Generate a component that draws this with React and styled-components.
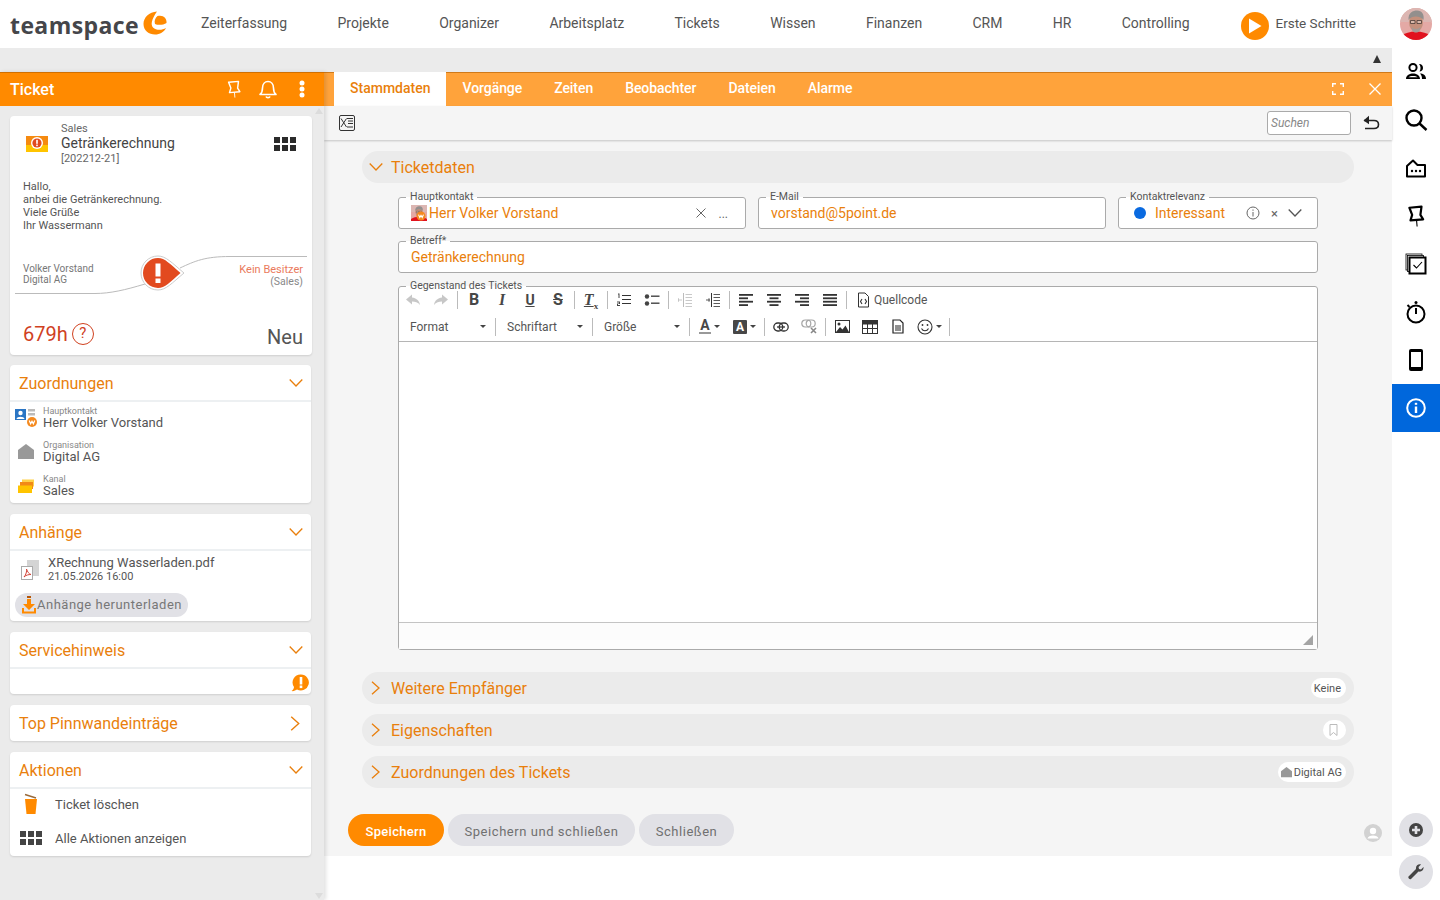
import styled, { createGlobalStyle } from "styled-components";

const orange = "#ff8a00";
const orangeText = "#e97f0c";
const gray = "#555";

const GlobalStyle = createGlobalStyle`
  html, body { margin: 0; padding: 0; height: 100%; background: #fff; overflow: hidden; }
  body { font-family: Roboto, "Liberation Sans", sans-serif; color: ${gray}; }
  * { box-sizing: border-box; }
`;

const Page = styled.div`
  width: 1440px;
  height: 900px;
  display: flex;
  flex-direction: column;
  overflow: hidden;
`;

// top navigation ------------------------------------------------------------
const TopBar = styled.header`
  height: 48px;
  flex: none;
  display: flex;
  align-items: center;
  background: #fff;
`;
const LogoWrap = styled.div`
  width: 201px;
  height: 48px;
  flex: none;
  display: flex;
  align-items: flex-start;
  padding-left: 10px;
`;
const LogoText = styled.span`
  font-family: "Open Sans", sans-serif;
  font-weight: 700;
  font-size: 23px;
  line-height: 30px;
  letter-spacing: 0.4px;
  color: #45464a;
  margin-top: 10px;
`;
const LogoMark = styled.svg`
  width: 24px;
  height: 24px;
  margin: 11px 0 0 4px;
  flex: none;
`;
const Nav = styled.nav`
  display: flex;
  gap: 50.35px;
  font-size: 14px;
  color: #555;
  padding-bottom: 2px;
`;
const StartGroup = styled.div`
  margin-left: auto;
  display: flex;
  align-items: flex-start;
  font-size: 13.5px;
  line-height: 16px;
  color: #555;
  gap: 6px;
`;
const StartLabel = styled.span`
  padding-top: 7px;
`;
const PlayCircle = styled.span`
  width: 28px;
  height: 28px;
  border-radius: 50%;
  background: ${orange};
  display: flex;
  align-items: center;
  justify-content: center;
  margin-top: 4px;
`;
const AvatarImage = styled.svg`
  width: 32px;
  height: 32px;
  border-radius: 50%;
  margin: 0 8px 0 44px;
  flex: none;
`;

// body ----------------------------------------------------------------------
const Body = styled.div`
  flex: 1;
  display: flex;
  min-height: 0;
`;
const MainColumn = styled.div`
  width: 1392px;
  display: flex;
  flex-direction: column;
`;
const CollapseStrip = styled.div`
  height: 24px;
  flex: none;
  background: #ebebeb;
  display: flex;
  align-items: center;
  justify-content: flex-end;
  padding: 0 11px 2px 0;
`;
const UpTriangle = styled.span`
  width: 0;
  height: 0;
  border-left: 4px solid transparent;
  border-right: 4px solid transparent;
  border-bottom: 8px solid #333;
`;
const Workspace = styled.div`
  flex: 1;
  display: flex;
  min-height: 0;
`;

// left panel ----------------------------------------------------------------
const LeftPanel = styled.aside`
  position: relative;
  z-index: 2;
  width: 324px;
  flex: none;
  background: #ebebeb;
  box-shadow: 2px 0 4px rgba(0, 0, 0, 0.12);
  display: flex;
  flex-direction: column;
`;
const PanelHeader = styled.div`
  height: 34px;
  flex: none;
  background: ${orange};
  box-shadow: inset 0 1px 0 rgba(170, 90, 0, 0.55);
  color: #fff;
  display: flex;
  align-items: center;
  padding-left: 10px;
  font-size: 16px;
  font-weight: 500;
`;
const PanelTitle = styled.span`
  flex: 1;
`;
const HeaderIcon = styled.span`
  width: 34px;
  height: 34px;
  display: flex;
  align-items: center;
  justify-content: center;
`;
const HeaderIcons = styled.div`
  display: flex;
  padding-right: 5px;
`;
const ScrollArrow = styled.span`
  position: absolute;
  right: 1px;
  ${(p) => (p.$down ? "bottom: 1px;" : "top: 36px;")}
  width: 0;
  height: 0;
  border-left: 4px solid transparent;
  border-right: 4px solid transparent;
  ${(p) => (p.$down ? "border-top" : "border-bottom")}: 6px solid #dcdcdc;
`;
const Cards = styled.div`
  display: flex;
  flex-direction: column;
  gap: 11px;
  padding: 10px 13px 0 10px;
`;
const Card = styled.section`
  background: #fff;
  border-radius: 4px;
  box-shadow: 0 1px 2px rgba(0, 0, 0, 0.12);
`;
const TicketCard = styled(Card)`
  height: 239px;
  width: 302px;
  margin-bottom: -1px;
  display: flex;
  flex-direction: column;
  padding: 6px 9px 0 13px;
`;
const TicketHead = styled.div`
  display: flex;
  align-items: center;
`;
const TicketIcon = styled.svg`
  width: 24px;
  height: 20px;
  margin: 0 12px 0 2px;
  flex: none;
`;
const TicketTitles = styled.div`
  flex: 1;
  display: flex;
  flex-direction: column;
`;
const SmallGray = styled.span`
  font-size: 11px;
  line-height: 13px;
  color: #666;
`;
const TicketName = styled.span`
  font-size: 14px;
  line-height: 17px;
  color: #444;
`;
const MessageText = styled.p`
  margin: 15px 0 0;
  font-size: 11px;
  line-height: 13px;
  color: #555;
`;
const Flow = styled.div`
  position: relative;
  height: 42px;
  margin: 22px 0 0;
  display: flex;
  justify-content: space-between;
  align-items: flex-end;
  font-size: 10px;
  line-height: 11px;
  padding-bottom: 10px;
`;
const FlowGraphic = styled.svg`
  position: absolute;
  left: -13px;
  top: 0;
  width: 302px;
  height: 48px;
  overflow: visible;
`;
const FlowSide = styled.div`
  position: relative;
  display: flex;
  flex-direction: column;
  color: #777;
  top: ${(p) => (p.$right ? 1 : -1)}px;
  text-align: ${(p) => (p.$right ? "right" : "left")};
  align-items: ${(p) => (p.$right ? "flex-end" : "flex-start")};
`;
const OwnerName = styled.span`
  color: #ea7a5c;
  font-size: 11px;
  line-height: 13px;
`;
const OwnerSub = styled.span`
  color: #888;
  font-size: 10.5px;
`;
const TicketFoot = styled.div`
  margin-top: auto;
  padding-bottom: 6px;
  display: flex;
  align-items: flex-end;
  justify-content: space-between;
`;
const Hours = styled.div`
  display: flex;
  align-items: center;
  gap: 4px;
  color: #d0411f;
  font-size: 20px;
  line-height: 24px;
  padding-bottom: 3px;
`;
const QuestionMark = styled.span`
  width: 22px;
  height: 22px;
  border: 1.5px solid #d0411f;
  border-radius: 50%;
  font-size: 15px;
  line-height: 19px;
  text-align: center;
`;
const Status = styled.span`
  font-size: 20px;
  line-height: 24px;
  color: #555;
`;
const BoxCard = styled(Card)`
  width: 301px;
`;
const BoxHeader = styled.div`
  height: ${(p) => (p.$open ? 37 : 36)}px;
  display: flex;
  align-items: center;
  justify-content: space-between;
  padding: 0 8px 0 9px;
  font-size: 16px;
  color: ${orangeText};
  border-bottom: ${(p) => (p.$open ? "2px solid #edf0f2" : "none")};
  padding-top: ${(p) => (p.$open ? 1 : 0)}px;
`;
const AssignRow = styled.div`
  height: ${(p) => p.$h || 34}px;
  display: flex;
  align-items: center;
  padding: 0 0 ${(p) => p.$pb || 0}px 5px;
  gap: 6px;
`;
const AssignIcon = styled.span`
  width: 22px;
  display: flex;
  justify-content: center;
  flex: none;
`;
const AssignText = styled.div`
  display: flex;
  flex-direction: column;
`;
const AssignLabel = styled.span`
  font-size: 9px;
  line-height: 10px;
  color: #888;
`;
const AssignValue = styled.span`
  font-size: 13px;
  line-height: 14px;
  color: #555;
`;
const AttachmentRow = styled.div`
  display: flex;
  align-items: center;
  padding: 5px 0 0 11px;
  gap: 9px;
`;
const FileName = styled.div`
  font-size: 13px;
  line-height: 14px;
  color: #555;
`;
const FileDate = styled.div`
  font-size: 11px;
  line-height: 13px;
  color: #555;
`;
const DownloadButton = styled.div`
  width: 173px;
  height: 24px;
  margin: 10px 0 4px 5px;
  border-radius: 12px;
  background: #e1e1e6;
  display: flex;
  align-items: center;
  padding: 0 0 1px 6px;
  font-size: 13px;
  letter-spacing: 0.5px;
  color: #777;
`;
const ServiceBody = styled.div`
  height: 25px;
  display: flex;
  justify-content: flex-end;
  align-items: flex-end;
  padding: 0 2px 2px 0;
`;
const ActionList = styled.div`
  margin-top: -2px;
  padding-bottom: 1px;
`;
const ActionRow = styled.div`
  height: 34px;
  display: flex;
  align-items: center;
  font-size: 13px;
  color: #555;
`;
const ActionIcon = styled.span`
  width: 45px;
  flex: none;
  display: flex;
  justify-content: center;
  padding-right: 3px;
`;
const Grid = styled.span`
  display: grid;
  grid-template-columns: repeat(3, ${(p) => p.$size}px);
  grid-auto-rows: ${(p) => p.$size}px;
  gap: 2px;
  margin-right: ${(p) => p.$mr || 0}px;
  & > i {
    display: block;
    background: ${(p) => p.$color};
  }
`;

// right panel ---------------------------------------------------------------
const ContentPanel = styled.main`
  flex: 1;
  display: flex;
  flex-direction: column;
  min-width: 0;
`;
const TabBar = styled.div`
  height: 34px;
  flex: none;
  background: #ffa33b;
  box-shadow: inset 0 1px 0 rgba(170, 90, 0, 0.55);
  display: flex;
  padding-left: 10px;
`;
const Tab = styled.div`
  padding: 0 16px 2px;
  display: flex;
  align-items: center;
  font-size: 14px;
  font-weight: 500;
  letter-spacing: ${(p) => (p.$active ? 0 : -0.06)}px;
  color: ${(p) => (p.$active ? orangeText : "#fff")};
  background: ${(p) => (p.$active ? "#fff" : "transparent")};
`;
const TabTools = styled.div`
  margin-left: auto;
  display: flex;
  align-items: center;
  gap: 24px;
  padding-right: 10px;
`;
const Toolbar = styled.div`
  position: relative;
  z-index: 1;
  height: 34px;
  flex: none;
  background: #f5f5f5;
  box-shadow: 0 1px 2px rgba(0, 0, 0, 0.2);
  display: flex;
  align-items: center;
  padding: 0 12px 0 15px;
`;
const SearchBox = styled.div`
  margin-left: auto;
  width: 84px;
  height: 24px;
  background: #fff;
  border: 1px solid #aaa;
  border-radius: 3px;
  font-size: 12px;
  font-style: italic;
  line-height: 22px;
  padding-left: 3px;
  color: #888;
`;
const BackIcon = styled.svg`
  margin-left: 11px;
  flex: none;
`;
const FormArea = styled.div`
  height: 716px;
  flex: none;
  background: #f5f5f5;
  display: flex;
  flex-direction: column;
  padding: 11px 10px 0 24px;
`;
const SectionBar = styled.div`
  height: 32px;
  margin: ${(p) => p.$mt || 0}px 28px 0 14px;
  flex: none;
  background: #ebebeb;
  border-radius: 16px;
  display: flex;
  align-items: center;
  padding: 0 8px 0 7px;
  font-size: 16px;
  color: ${orangeText};
`;
const SectionTitle = styled.span`
  flex: 1;
  margin-left: 8px;
`;
const Pill = styled.span`
  height: 20px;
  padding: 0 ${(p) => (p.$wide ? 4 : 5)}px 0 3px;
  background: #fff;
  border-radius: 10px;
  display: flex;
  align-items: center;
  gap: 2px;
  font-size: 11px;
  color: #555;
`;
const FormGrid = styled.div`
  margin: 8px 64px 0 50px;
  display: grid;
  grid-template-columns: 348px 348px 200px;
  column-gap: 12px;
  row-gap: 6px;
`;
const Field = styled.fieldset`
  margin: 0;
  padding: 0;
  min-width: 0;
  height: ${(p) => p.$h}px;
  background: #fff;
  border: 1px solid #aaa;
  border-radius: 3px;
  grid-column: ${(p) => p.$span || "auto"};
  display: flex;
  flex-direction: column;
`;
const Legend = styled.legend`
  margin-left: 7px;
  padding: 0 4px;
  font-size: 10.5px;
  line-height: 12px;
  height: 12px;
  color: #555;
`;
const FieldBody = styled.div`
  height: 20px;
  display: flex;
  align-items: center;
  padding: 0 12px;
  font-size: 14px;
  color: ${orangeText};
`;
const ClearX = styled.span`
  color: #666;
  font-size: ${(p) => p.$size}px;
  line-height: 1;
  margin: ${(p) => p.$margin};
`;
const SpacedEnd = styled.span`
  margin-left: auto;
  display: flex;
  align-items: center;
  margin-right: ${(p) => p.$mr || 0}px;
`;
const ContactPhoto = styled.svg`
  width: 16px;
  height: 16px;
  margin-right: 2px;
  flex: none;
`;
const BlueDot = styled.span`
  width: 12px;
  height: 12px;
  border-radius: 50%;
  background: #0a6ae0;
  margin: 0 9px 0 3px;
  flex: none;
`;

// editor --------------------------------------------------------------------
const EditorField = styled(Field)`
  margin-top: 1px;
`;
const EditorTools = styled.div`
  height: 50px;
  flex: none;
  border-bottom: 1px solid #b5b5b5;
  display: flex;
  flex-direction: column;
`;
const ToolRow = styled.div`
  height: 27px;
  flex: none;
  display: flex;
  align-items: center;
  font-size: 12px;
  color: #555;
  margin-top: ${(p) => p.$mt || 0}px;
`;
const ToolButton = styled.span`
  width: ${(p) => p.$w || 28}px;
  height: 24px;
  flex: none;
  display: flex;
  align-items: center;
  justify-content: center;
  gap: 3px;
  opacity: ${(p) => (p.$off ? 0.32 : 1)};
  margin-right: ${(p) => p.$mr || 0}px;
`;
const Sep = styled.span`
  width: 1px;
  height: 18px;
  margin: 0 2px;
  flex: none;
  background: #bbb;
`;
const Combo = styled.span`
  width: ${(p) => p.$w}px;
  height: 24px;
  padding-left: ${(p) => p.$pl}px;
  padding-right: 7px;
  flex: none;
  display: flex;
  align-items: center;
  justify-content: space-between;
`;
const Caret = styled.span`
  width: 0;
  height: 0;
  border-left: 3px solid transparent;
  border-right: 3px solid transparent;
  border-top: 3px solid #444;
  flex: none;
`;
const Glyph = styled.span`
  font-family: ${(p) => (p.$serif ? '"Liberation Serif", serif' : "Roboto, sans-serif")};
  font-size: ${(p) => p.$size || 16}px;
  font-weight: 700;
  font-style: ${(p) => (p.$italic ? "italic" : "normal")};
  text-decoration: ${(p) => p.$deco || "none"};
  color: #474747;
  line-height: 16px;
`;
const SubX = styled.sub`
  font-size: 9px;
  font-weight: 700;
  line-height: 0;
  font-style: normal;
`;
const ColorA = styled.span`
  font-size: 14px;
  font-weight: 700;
  line-height: 13px;
  color: #474747;
  border-bottom: 2px solid #999;
  padding: 0 1px;
`;
const FilledA = styled.span`
  width: 14px;
  height: 14px;
  background: #474747;
  color: #fff;
  font-size: 12px;
  font-weight: 700;
  line-height: 14px;
  text-align: center;
  border-radius: 1px;
`;
const EditorBody = styled.div`
  flex: 1;
  background: #fff;
`;
const EditorFoot = styled.div`
  height: 27px;
  flex: none;
  background: #fcfcfc;
  border-top: 1px solid #c4c4c4;
  display: flex;
  justify-content: flex-end;
  align-items: flex-end;
  padding: 0 4px 4px 0;
`;
const Resizer = styled.span`
  width: 0;
  height: 0;
  border-left: 10px solid transparent;
  border-bottom: 10px solid #a4a4a4;
`;

// footer buttons ------------------------------------------------------------
const Actions = styled.div`
  display: flex;
  align-items: center;
  gap: 4px;
  margin-top: 26px;
`;
const ActionButton = styled.div`
  height: 32px;
  width: ${(p) => p.$w}px;
  padding-top: 2px;
  border-radius: 16px;
  display: flex;
  align-items: center;
  justify-content: center;
  font-size: 13px;
  font-weight: ${(p) => (p.$primary ? 500 : 400)};
  letter-spacing: ${(p) => (p.$primary ? 0.3 : 0.55)}px;
  background: ${(p) => (p.$primary ? orange : "#e1e1e6")};
  color: ${(p) => (p.$primary ? "#fff" : "#707070")};
`;
const UserDot = styled.span`
  margin-left: auto;
  width: 18px;
  height: 18px;
  margin-top: 6px;
  flex: none;
  display: flex;
`;

// rail ----------------------------------------------------------------------
const Rail = styled.aside`
  width: 48px;
  flex: none;
  display: flex;
  flex-direction: column;
  background: #fff;
`;
const RailItem = styled.div`
  height: 48px;
  flex: none;
  display: flex;
  align-items: center;
  justify-content: center;
  background: ${(p) => (p.$active ? "#0067dc" : "transparent")};
`;
const RailFoot = styled.div`
  margin-top: auto;
  display: flex;
  flex-direction: column;
  align-items: center;
  gap: 8px;
  padding-bottom: 11px;
`;
const RoundButton = styled.div`
  width: 34px;
  height: 34px;
  border-radius: 50%;
  background: #e1e1e6;
  display: flex;
  align-items: center;
  justify-content: center;
`;

// drawings ------------------------------------------------------------------
const Chevron = ({ dir = "down", size = 14, color = orangeText }) => {
  const points = dir === "down" ? "0.7,3.5 7,10 13.3,3.5" : "3,0.7 10,7 3,13.3";
  return (
    <svg width={size} height={size} viewBox="0 0 14 14" fill="none" stroke={color} strokeWidth="1.3">
      <polyline points={points} />
    </svg>
  );
};

const PinIcon = ({ color = "#000", size = 20, sw = 1.8 }) => (
  <svg width={size} height={size} viewBox="0 0 20 20" fill="none" stroke={color} strokeWidth={sw}>
    <path d="M4 2.5 L15 1.5 L14 9 L16.5 13 L5 14 L6.5 9 Z" strokeLinejoin="round" />
    <path d="M10.5 14 L11 19.5" strokeWidth="1" />
  </svg>
);

const HouseIcon = ({ w = 18, color = "#999" }) => (
  <svg width={w} height={w} viewBox="0 0 16 16" fill={color}>
    <path d="M0 15 V6 L8 0 L16 6 V15 Z" />
  </svg>
);

const FaceDrawing = () => (
  <>
    <rect width="32" height="32" fill="#e4a9a5" />
    <rect x="0" y="0" width="32" height="14" fill="#dcb6b2" />
    <path d="M0 32 V28 C5 25 10 23.5 16 23.5 C22 23.5 27 25 32 28 V32 Z" fill="#e1121e" />
    <ellipse cx="16" cy="14" rx="7" ry="10" fill="#c4907c" />
    <path d="M8.5 12 C8 4.5 13 2.5 17 2.5 C22 2.5 24.5 6.5 23.5 12 C21 8 12 7 8.5 12 Z" fill="#938f8d" />
    <path d="M10.5 12.5 h4.5 v3 h-4.5 Z M17 12.5 h4.5 v3 h-4.5 Z" fill="#d8b8aa" stroke="#4a3b36" strokeWidth="0.8" />
    <path d="M11.5 19 C14 21.5 18 21.5 20.5 19 L19.5 23 C17.5 25 14.5 25 12.5 23 Z" fill="#a59a96" />
  </>
);

const WBadge = ({ cx, cy, r }) => (
  <>
    <circle cx={cx} cy={cy} r={r} fill="#f58a1f" />
    <path d={`M${cx - r * 0.55} ${cy - r * 0.3} l${r * 0.28} ${r * 0.65} l${r * 0.27} -${r * 0.5} l${r * 0.27} ${r * 0.5} l${r * 0.28} -${r * 0.65}`} fill="none" stroke="#fff" strokeWidth={r * 0.25} />
  </>
);

const SmallLine = ({ x, y, w, h = 1, fill = "#333" }) => <rect x={x} y={y} width={w} height={h} fill={fill} />;

const OrderedList = () => (
  <svg width="16" height="16" viewBox="0 0 16 16" fill="#444">
    <SmallLine x="6" y="3" w="9" />
    <SmallLine x="6" y="7" w="9" />
    <SmallLine x="6" y="11" w="9" />
    <path d="M2 1.5 h1.5 v4.5 h-1 v-3.5 h-.5 Z M1 9.5 h3 v2.5 h-2 v1 h2 v1 h-3 v-2.5 h2 v-1 h-2 Z" />
  </svg>
);
const BulletList = () => (
  <svg width="16" height="16" viewBox="0 0 16 16" fill="#444">
    <circle cx="3" cy="4.5" r="2.2" />
    <circle cx="3" cy="11.5" r="2.2" />
    <rect x="7" y="3.5" width="8.5" height="1.4" />
    <rect x="7" y="10.5" width="8.5" height="1.4" />
  </svg>
);
const IndentIcon = ({ out }) => (
  <svg width="16" height="16" viewBox="0 0 16 16" fill="#333">
    {[2, 5, 8, 11, 14].map((y) => (
      <rect key={y} x="8.5" y={y} width={6.5} height="0.8" />
    ))}
    <rect x="6" y="1" width="1" height="14" />
    <rect x="1" y="7.6" width="4" height="0.8" />
    <rect x={out ? 1 : 3.6} y="6.2" width="0.8" height="3.6" />
  </svg>
);
const AlignIcon = ({ kind }) => {
  const widths = kind === "justify" ? [14, 14, 14, 14] : [14, 9, 14, 9];
  return (
    <svg width="14" height="14" viewBox="0 0 14 14" fill="#333">
      {widths.map((w, i) => {
        const x = kind === "left" || kind === "justify" ? 0 : kind === "center" ? (14 - w) / 2 : 14 - w;
        return <rect key={i} x={x} y={1 + i * 3.4} width={w} height="1.8" />;
      })}
    </svg>
  );
};
const SourceIcon = () => (
  <svg width="14" height="16" viewBox="0 0 14 16" fill="none" stroke="#333">
    <path d="M2.5 1 H9 L12.5 4.5 V15 H2.5 Z" />
    <path d="M6 7 L4.5 9.5 L6 12 M9 7 L10.5 9.5 L9 12" strokeWidth="1.1" />
  </svg>
);
const LinkIcon = () => (
  <svg width="16" height="12" viewBox="0 0 16 12" fill="none" stroke="#333" strokeWidth="1.3">
    <rect x="0.8" y="2" width="9" height="8" rx="4" />
    <rect x="6.2" y="2" width="9" height="8" rx="4" />
    <path d="M4 6 H12" />
  </svg>
);
const UnlinkIcon = () => (
  <svg width="16" height="15" viewBox="0 0 16 15" fill="none" stroke="#a5a5a5" strokeWidth="1.2">
    <rect x="0.8" y="1" width="9" height="7" rx="3.5" />
    <rect x="5.2" y="1" width="9" height="7" rx="3.5" />
    <path d="M10 9 L15 14 M15 9 L10 14" stroke="#888" strokeWidth="1.6" />
  </svg>
);
const ImageIcon = () => (
  <svg width="15" height="13" viewBox="0 0 15 13">
    <rect x="0.5" y="0.5" width="14" height="12" fill="#fff" stroke="#333" />
    <circle cx="4" cy="4" r="1.5" fill="#333" />
    <path d="M1 12 L5 7 L7.5 9.5 L10.5 5.5 L14 12 Z" fill="#333" />
  </svg>
);
const TableIcon = () => (
  <svg width="16" height="14" viewBox="0 0 16 14" fill="none" stroke="#333">
    <rect x="0.5" y="0.5" width="15" height="13" />
    <rect x="0.5" y="0.5" width="15" height="3.5" fill="#333" />
    <path d="M5.5 4 V13.5 M10.5 4 V13.5 M0.5 8.5 H15.5" />
  </svg>
);
const PageIcon = () => (
  <svg width="12" height="15" viewBox="0 0 12 15" fill="none" stroke="#222">
    <path d="M1 1 H8 L11 4 V14 H1 Z" strokeWidth="1.2" />
    <path d="M3 7 H9 M3 9 H9 M3 11 H9" />
  </svg>
);
const SmileyIcon = () => (
  <svg width="16" height="16" viewBox="0 0 16 16" fill="none" stroke="#333" strokeWidth="1.1">
    <circle cx="8" cy="8" r="7" />
    <circle cx="5.5" cy="6" r="0.9" fill="#333" stroke="none" />
    <circle cx="10.5" cy="6" r="0.9" fill="#333" stroke="none" />
    <path d="M4.5 9.5 C6 12.5 10 12.5 11.5 9.5" />
  </svg>
);
const ArrowIcon = ({ flip }) => (
  <svg width="16" height="12" viewBox="0 0 16 12" fill="#555" transform={flip ? "scale(-1 1)" : undefined}>
    <path d="M7 0.5 L1 5.5 L7 10.5 V7.5 C10 7.5 13 8 15 11 C14.5 6.5 11 4 7 3.5 Z" />
  </svg>
);

const navItems = ["Zeiterfassung", "Projekte", "Organizer", "Arbeitsplatz", "Tickets", "Wissen", "Finanzen", "CRM", "HR", "Controlling"];
const tabs = ["Stammdaten", "Vorgänge", "Zeiten", "Beobachter", "Dateien", "Alarme"];

const App = () => {
  return (
    <Page>
      <GlobalStyle />
      <TopBar>
        <LogoWrap>
          <LogoText>teamspace</LogoText>
          <LogoMark viewBox="0 0 24 24">
            <path d="M14 0.5 C6 1 0.5 6.5 0.5 13 C0.5 19.5 6 23.5 12 23.5 C17 23.5 21 21 23 17 C19 19.5 13 19.5 10 16.5 C7.5 13.5 8.5 8.5 14 0.5 Z" fill={orange} />
            <path d="M14.5 5 C20 3.5 24 7 23.5 12 C20.5 14 15 14.5 12 13 C11 10 12 7 14.5 5 Z" fill={orange} />
          </LogoMark>
        </LogoWrap>
        <Nav>
          {navItems.map((item) => (
            <span key={item}>{item}</span>
          ))}
        </Nav>
        <StartGroup>
          <PlayCircle>
            <svg width="14" height="16" viewBox="0 0 14 16" fill="#fff">
              <path d="M1 0.5 L13.5 8 L1 15.5 Z" />
            </svg>
          </PlayCircle>
          <StartLabel>Erste Schritte</StartLabel>
        </StartGroup>
        <AvatarImage viewBox="0 0 32 32">
          <FaceDrawing />
        </AvatarImage>
      </TopBar>

      <Body>
        <MainColumn>
          <CollapseStrip>
            <UpTriangle />
          </CollapseStrip>
          <Workspace>
            <LeftPanel>
              <PanelHeader>
                <PanelTitle>Ticket</PanelTitle>
                <HeaderIcons>
                  <HeaderIcon>
                    <PinIcon color="#fff" size={18} sw={1.6} />
                  </HeaderIcon>
                  <HeaderIcon>
                    <svg width="20" height="20" viewBox="0 0 20 20" fill="none" stroke="#fff" strokeWidth="1.6">
                      <path d="M2 15.5 C4 14 4.5 12 4.5 9 C4.5 5 7 2.5 10 2.5 C13 2.5 15.5 5 15.5 9 C15.5 12 16 14 18 15.5 Z" strokeLinejoin="round" />
                      <path d="M8 17.5 C8.5 19 11.5 19 12 17.5" />
                    </svg>
                  </HeaderIcon>
                  <HeaderIcon>
                    <svg width="6" height="18" viewBox="0 0 6 18" fill="#fff">
                      <circle cx="3" cy="3" r="2.5" />
                      <circle cx="3" cy="9" r="2.5" />
                      <circle cx="3" cy="15" r="2.5" />
                    </svg>
                  </HeaderIcon>
                </HeaderIcons>
              </PanelHeader>
              <ScrollArrow />
              <ScrollArrow $down />
              <Cards>
                <TicketCard>
                  <TicketHead>
                    <TicketIcon viewBox="0 0 24 20">
                      <rect x="1" y="2" width="22" height="9" fill="#f58a10" />
                      <rect x="1" y="11" width="22" height="7" fill="#ffc400" />
                      <circle cx="12" cy="9" r="6" fill="#fff" />
                      <circle cx="12" cy="9" r="4.6" fill="#e0491f" />
                      <rect x="11.2" y="5.8" width="1.6" height="4" fill="#fff" />
                      <rect x="11.2" y="10.6" width="1.6" height="1.6" fill="#fff" />
                    </TicketIcon>
                    <TicketTitles>
                      <SmallGray>Sales</SmallGray>
                      <TicketName>Getränkerechnung</TicketName>
                      <SmallGray>[202212-21]</SmallGray>
                    </TicketTitles>
                    <Grid $size={6} $color="#2b2b2b" $mr={7}>
                      <i /><i /><i /><i /><i /><i />
                    </Grid>
                  </TicketHead>
                  <MessageText>
                    Hallo,<br />
                    anbei die Getränkerechnung.<br />
                    Viele Grüße<br />
                    Ihr Wassermann
                  </MessageText>
                  <Flow>
                    <FlowGraphic viewBox="0 0 302 48">
                      <path d="M5 39.5 H85 C100 39.5 115 36 135 30 M170 14 C185 7 195 2.5 220 2.5 H297" fill="none" stroke="#bbb" />
                      <path d="M148 2 A17 17 0 1 0 148 36 C156 36 162 29 174 19 C162 9 156 2 148 2 Z" fill="#fff" stroke="#ccc" />
                      <path d="M148 4 A15 15 0 1 0 148 34 C155 34 160 28 170.5 19 C160 10 155 4 148 4 Z" fill="#e24a1f" />
                      <rect x="145.5" y="9.5" width="5" height="13" fill="#fff" />
                      <rect x="145.5" y="24.5" width="5" height="4.5" fill="#fff" />
                    </FlowGraphic>
                    <FlowSide>
                      <span>Volker Vorstand</span>
                      <span>Digital AG</span>
                    </FlowSide>
                    <FlowSide $right>
                      <OwnerName>Kein Besitzer</OwnerName>
                      <OwnerSub>(Sales)</OwnerSub>
                    </FlowSide>
                  </Flow>
                  <TicketFoot>
                    <Hours>
                      679h
                      <QuestionMark>?</QuestionMark>
                    </Hours>
                    <Status>Neu</Status>
                  </TicketFoot>
                </TicketCard>

                <BoxCard>
                  <BoxHeader $open>
                    Zuordnungen
                    <Chevron />
                  </BoxHeader>
                  <AssignRow $h={33} $pb={2}>
                    <AssignIcon>
                      <svg width="22" height="20" viewBox="0 0 22 20">
                        <rect x="0" y="1" width="11" height="11" fill="#2a75c4" />
                        <circle cx="5.5" cy="5" r="2.2" fill="#fff" />
                        <path d="M1.5 11 C2 8 9 8 9.5 11 Z" fill="#fff" />
                        <rect x="13" y="1" width="7" height="2.5" fill="#bbb" />
                        <rect x="13" y="5" width="7" height="2.5" fill="#bbb" />
                        <WBadge cx={17} cy={14} r={5} />
                      </svg>
                    </AssignIcon>
                    <AssignText>
                      <AssignLabel>Hauptkontakt</AssignLabel>
                      <AssignValue>Herr Volker Vorstand</AssignValue>
                    </AssignText>
                  </AssignRow>
                  <AssignRow>
                    <AssignIcon>
                      <HouseIcon w={16} />
                    </AssignIcon>
                    <AssignText>
                      <AssignLabel>Organisation</AssignLabel>
                      <AssignValue>Digital AG</AssignValue>
                    </AssignText>
                  </AssignRow>
                  <AssignRow>
                    <AssignIcon>
                      <svg width="18" height="15" viewBox="0 0 18 15">
                        <rect x="5" y="0.5" width="12" height="7" fill="#ffd24a" />
                        <rect x="3" y="3" width="13" height="7" fill="#f28a17" />
                        <rect x="1" y="6.5" width="14" height="7.5" fill="#ffc400" />
                      </svg>
                    </AssignIcon>
                    <AssignText>
                      <AssignLabel>Kanal</AssignLabel>
                      <AssignValue>Sales</AssignValue>
                    </AssignText>
                  </AssignRow>
                </BoxCard>

                <BoxCard>
                  <BoxHeader $open>
                    Anhänge
                    <Chevron />
                  </BoxHeader>
                  <AttachmentRow>
                    <svg width="18" height="20" viewBox="0 0 18 20">
                      <rect x="6" y="0" width="12" height="16" fill="#d4d4d4" />
                      <rect x="0.5" y="6.5" width="11" height="13" fill="#fff" stroke="#aaa" />
                      <path d="M3 17 C5 15 6 11 5.5 9 C6.5 12 8 14 10 14.5 C7.5 14.5 5 15 3 17 Z" fill="none" stroke="#d2453a" />
                    </svg>
                    <div>
                      <FileName>XRechnung Wasserladen.pdf</FileName>
                      <FileDate>21.05.2026 16:00</FileDate>
                    </div>
                  </AttachmentRow>
                  <DownloadButton>
                    <svg width="16" height="18" viewBox="0 0 16 18" fill={orange}>
                      <rect x="6" y="0" width="4" height="2" fill="#b3560a" />
                      <path d="M6 3 H10 V8 H14 L8 14 L2 8 H6 Z" />
                      <rect x="1" y="15.5" width="14" height="2" />
                      <rect x="1" y="12" width="2" height="5" />
                      <rect x="13" y="12" width="2" height="5" />
                    </svg>
                    Anhänge herunterladen
                  </DownloadButton>
                </BoxCard>

                <BoxCard>
                  <BoxHeader $open>
                    Servicehinweis
                    <Chevron />
                  </BoxHeader>
                  <ServiceBody>
                    <svg width="18" height="18" viewBox="0 0 18 18">
                      <path d="M10 0.5 A8 8 0 1 1 6 15.5 C4.5 16.5 2.5 17.5 0.5 17 C2 16 3 14.5 3 13 A8 8 0 0 1 10 0.5 Z" fill={orange} />
                      <rect x="8.7" y="3" width="2.6" height="7.5" fill="#fff" />
                      <rect x="8.7" y="11.5" width="2.6" height="2.6" fill="#fff" />
                    </svg>
                  </ServiceBody>
                </BoxCard>

                <BoxCard>
                  <BoxHeader>
                    Top Pinnwandeinträge
                    <Chevron dir="right" size={15} />
                  </BoxHeader>
                </BoxCard>

                <BoxCard>
                  <BoxHeader $open>
                    Aktionen
                    <Chevron />
                  </BoxHeader>
                  <ActionList>
                    <ActionRow>
                      <ActionIcon>
                        <svg width="14" height="22" viewBox="0 0 14 22">
                          <path d="M1 1.5 L12 5" stroke="#9a6a3a" strokeWidth="1.4" />
                          <path d="M1 6 H13 L11.5 21 H2.5 Z" fill={orange} />
                        </svg>
                      </ActionIcon>
                      Ticket löschen
                    </ActionRow>
                    <ActionRow>
                      <ActionIcon>
                        <Grid $size={6} $color="#444">
                          <i /><i /><i /><i /><i /><i />
                        </Grid>
                      </ActionIcon>
                      Alle Aktionen anzeigen
                    </ActionRow>
                  </ActionList>
                </BoxCard>
              </Cards>
            </LeftPanel>

            <ContentPanel>
              <TabBar>
                {tabs.map((tab, i) => (
                  <Tab key={tab} $active={i === 0}>{tab}</Tab>
                ))}
                <TabTools>
                  <svg width="12" height="12" viewBox="0 0 12 12" fill="none" stroke="#fff" strokeWidth="1.4">
                    <path d="M0.7 4 V0.7 H4 M8 0.7 H11.3 V4 M11.3 8 V11.3 H8 M4 11.3 H0.7 V8" />
                  </svg>
                  <svg width="14" height="14" viewBox="0 0 14 14" stroke="#fff" strokeWidth="1.3">
                    <path d="M1.5 1.5 L12.5 12.5 M12.5 1.5 L1.5 12.5" />
                  </svg>
                </TabTools>
              </TabBar>

              <Toolbar>
                <svg width="16" height="16" viewBox="0 0 16 16" fill="none" stroke="#333">
                  <rect x="0.5" y="0.5" width="15" height="15" rx="1.5" />
                  <path d="M2 3.5 L7.5 12 M7.5 3.5 L2 12 M8 3.5 H14 M9 6 H14 M9 8.5 H14 M8 12 H14" />
                </svg>
                <SearchBox>Suchen</SearchBox>
                <BackIcon width="18" height="16" viewBox="0 0 18 16" fill="none" stroke="#222" strokeWidth="1.6">
                  <path d="M2 5.5 H12 C15 5.5 16.5 7.5 16.5 9.5 C16.5 12 15 13.5 12 13.5 H3" />
                  <path d="M7 0.8 L1.5 5.5 L7 9.2 Z" fill="#222" stroke="none" />
                </BackIcon>
              </Toolbar>

              <FormArea>
                <SectionBar>
                  <Chevron />
                  <SectionTitle>Ticketdaten</SectionTitle>
                </SectionBar>

                <FormGrid>
                  <Field $h={38}>
                    <Legend>Hauptkontakt</Legend>
                    <FieldBody>
                      <ContactPhoto viewBox="0 0 32 32">
                        <FaceDrawing />
                        <WBadge cx={20} cy={22} r={9} />
                      </ContactPhoto>
                      Herr Volker Vorstand
                      <SpacedEnd>
                        <svg width="12" height="12" viewBox="0 0 12 12" stroke="#666" strokeWidth="1">
                          <path d="M1.5 1.5 L10.5 10.5 M10.5 1.5 L1.5 10.5" />
                        </svg>
                        <ClearX $size={12} $margin="2px 5px 0 12px">...</ClearX>
                      </SpacedEnd>
                    </FieldBody>
                  </Field>
                  <Field $h={38}>
                    <Legend>E-Mail</Legend>
                    <FieldBody>vorstand@5point.de</FieldBody>
                  </Field>
                  <Field $h={38}>
                    <Legend>Kontaktrelevanz</Legend>
                    <FieldBody>
                      <BlueDot />
                      Interessant
                      <SpacedEnd $mr={3}>
                        <svg width="14" height="14" viewBox="0 0 14 14" fill="none" stroke="#666">
                          <circle cx="7" cy="7" r="6" />
                          <path d="M7 6 V10.5 M7 3.5 V4.8" />
                        </svg>
                        <ClearX $size={13} $margin="0 10px 0 11px">×</ClearX>
                        <Chevron color="#555" />
                      </SpacedEnd>
                    </FieldBody>
                  </Field>
                  <Field $h={38} $span="1 / -1">
                    <Legend>Betreff*</Legend>
                    <FieldBody>Getränkerechnung</FieldBody>
                  </Field>
                  <EditorField $h={370} $span="1 / -1">
                    <Legend>Gegenstand des Tickets</Legend>
                    <EditorTools>
                      <ToolRow $mt={-6}>
                        <ToolButton $off><ArrowIcon /></ToolButton>
                        <ToolButton $off><ArrowIcon flip /></ToolButton>
                        <Sep />
                        <ToolButton><Glyph>B</Glyph></ToolButton>
                        <ToolButton><Glyph $italic $serif>I</Glyph></ToolButton>
                        <ToolButton><Glyph $deco="underline" $size={14}>U</Glyph></ToolButton>
                        <ToolButton><Glyph $deco="line-through">S</Glyph></ToolButton>
                        <Sep />
                        <ToolButton>
                          <Glyph $italic $serif $deco="underline">T<SubX>x</SubX></Glyph>
                        </ToolButton>
                        <Sep />
                        <ToolButton><OrderedList /></ToolButton>
                        <ToolButton><BulletList /></ToolButton>
                        <Sep />
                        <ToolButton $off><IndentIcon out /></ToolButton>
                        <ToolButton><IndentIcon /></ToolButton>
                        <Sep />
                        <ToolButton><AlignIcon kind="left" /></ToolButton>
                        <ToolButton><AlignIcon kind="center" /></ToolButton>
                        <ToolButton><AlignIcon kind="right" /></ToolButton>
                        <ToolButton><AlignIcon kind="justify" /></ToolButton>
                        <Sep />
                        <ToolButton $mr={-3}><SourceIcon /></ToolButton>
                        <span>Quellcode</span>
                      </ToolRow>
                      <ToolRow>
                        <Combo $w={94} $pl={11}>Format<Caret /></Combo>
                        <Sep />
                        <Combo $w={92} $pl={9}>Schriftart<Caret /></Combo>
                        <Sep />
                        <Combo $w={92} $pl={9}>Größe<Caret /></Combo>
                        <Sep />
                        <ToolButton $w={35}><ColorA>A</ColorA><Caret /></ToolButton>
                        <ToolButton $w={35}><FilledA>A</FilledA><Caret /></ToolButton>
                        <Sep />
                        <ToolButton><LinkIcon /></ToolButton>
                        <ToolButton><UnlinkIcon /></ToolButton>
                        <Sep />
                        <ToolButton><ImageIcon /></ToolButton>
                        <ToolButton><TableIcon /></ToolButton>
                        <ToolButton><PageIcon /></ToolButton>
                        <ToolButton $w={35}><SmileyIcon /><Caret /></ToolButton>
                        <Sep />
                      </ToolRow>
                    </EditorTools>
                    <EditorBody />
                    <EditorFoot>
                      <Resizer />
                    </EditorFoot>
                  </EditorField>
                </FormGrid>

                <SectionBar $mt={22}>
                  <Chevron dir="right" />
                  <SectionTitle>Weitere Empfänger</SectionTitle>
                  <Pill>Keine</Pill>
                </SectionBar>
                <SectionBar $mt={10}>
                  <Chevron dir="right" />
                  <SectionTitle>Eigenschaften</SectionTitle>
                  <Pill $wide>
                    <svg width="16" height="12" viewBox="0 0 16 12" fill="none" stroke="#bbb">
                      <path d="M4 0.5 H11 V11.5 L7.5 8.5 L4 11.5 Z" />
                    </svg>
                  </Pill>
                </SectionBar>
                <SectionBar $mt={10}>
                  <Chevron dir="right" />
                  <SectionTitle>Zuordnungen des Tickets</SectionTitle>
                  <Pill $wide>
                    <HouseIcon w={11} />
                    Digital AG
                  </Pill>
                </SectionBar>

                <Actions>
                  <ActionButton $primary $w={96}>Speichern</ActionButton>
                  <ActionButton $w={187}>Speichern und schließen</ActionButton>
                  <ActionButton $w={95}>Schließen</ActionButton>
                  <UserDot>
                    <svg width="18" height="18" viewBox="0 0 18 18">
                      <circle cx="9" cy="9" r="9" fill="#d2d2d2" />
                      <circle cx="9" cy="7" r="3.2" fill="#fff" />
                      <path d="M3.5 14.5 C4 10.5 14 10.5 14.5 14.5 Z" fill="#fff" />
                    </svg>
                  </UserDot>
                </Actions>
              </FormArea>
            </ContentPanel>
          </Workspace>
        </MainColumn>

        <Rail>
          <RailItem>
            <svg width="24" height="24" viewBox="0 0 24 24" fill="#000">
              <circle cx="9" cy="7.5" r="3.6" fill="none" stroke="#000" strokeWidth="2" />
              <path d="M15 4 C18 4 19 6 19 8 C19 10 17.5 11.5 15.5 11.5 C17 9.5 17 6 15 4 Z" />
              <path d="M2 19 C2 15 6 13.5 9 13.5 C12 13.5 16 15 16 19 Z M4.5 17.3 C6 15.5 12 15.5 13.5 17.3 Z" fillRule="evenodd" />
              <path d="M16 13.5 C19 13.5 22 15 22 19 H18 C18 16.5 17.5 15 16 13.5 Z" />
            </svg>
          </RailItem>
          <RailItem>
            <svg width="24" height="24" viewBox="0 0 24 24" fill="none" stroke="#000" strokeWidth="2.4">
              <circle cx="10" cy="10" r="7.5" />
              <path d="M15.5 15.5 L22.5 22" />
            </svg>
          </RailItem>
          <RailItem>
            <svg width="22" height="20" viewBox="0 0 22 20" fill="none" stroke="#000" strokeWidth="2">
              <path d="M2 18.5 V8 L8 2.5 L12.5 7 H20 V18.5 Z" strokeLinejoin="round" />
              <circle cx="7" cy="13" r="1.2" fill="#000" stroke="none" />
              <circle cx="11" cy="13" r="1.2" fill="#000" stroke="none" />
              <circle cx="15" cy="13" r="1.2" fill="#000" stroke="none" />
            </svg>
          </RailItem>
          <RailItem>
            <PinIcon size={22} sw={2} />
          </RailItem>
          <RailItem>
            <svg width="22" height="22" viewBox="0 0 22 22" fill="none" stroke="#000">
              <rect x="1" y="1" width="16" height="16" strokeWidth="0.8" />
              <rect x="2.5" y="2.5" width="16" height="16" fill="#fff" strokeWidth="0.8" />
              <rect x="4.5" y="4.5" width="16" height="16" fill="#fff" strokeWidth="2" />
              <path d="M8.5 12 L11.5 15 L17 9" strokeWidth="1.1" />
            </svg>
          </RailItem>
          <RailItem>
            <svg width="22" height="24" viewBox="0 0 22 24" fill="none" stroke="#000" strokeWidth="2">
              <circle cx="11" cy="14" r="8.5" />
              <path d="M11 8 V14" />
              <circle cx="11" cy="2.5" r="1.5" fill="#000" stroke="none" />
              <path d="M2.5 5 L4.5 7" />
            </svg>
          </RailItem>
          <RailItem>
            <svg width="14" height="22" viewBox="0 0 14 22">
              <rect x="0" y="0" width="14" height="22" rx="2" fill="#000" />
              <rect x="2" y="3" width="10" height="15" fill="#fff" />
            </svg>
          </RailItem>
          <RailItem $active>
            <svg width="20" height="20" viewBox="0 0 20 20" fill="none" stroke="#fff" strokeWidth="2">
              <circle cx="10" cy="10" r="8.8" />
              <path d="M10 8.5 V15" strokeWidth="2.4" />
              <path d="M10 4.8 V6.8" strokeWidth="2.4" />
            </svg>
          </RailItem>
          <RailFoot>
            <RoundButton>
              <svg width="14" height="14" viewBox="0 0 14 14">
                <circle cx="7" cy="7" r="7" fill="#444" />
                <path d="M5.7 3 H8.3 V5.7 H11 V8.3 H8.3 V11 H5.7 V8.3 H3 V5.7 H5.7 Z" fill="#e1e1e6" />
              </svg>
            </RoundButton>
            <RoundButton>
              <svg width="16" height="16" viewBox="0 0 16 16" fill="#444">
                <path d="M15.5 3 L13 5.5 L11 5 L10.5 3 L13 0.5 C10.5 -0.3 7.5 1.5 8 5 L0.5 12.5 C-0.2 14 1.5 15.8 3 15 L10.5 7.5 C13.5 8.3 16 5.8 15.5 3 Z" />
              </svg>
            </RoundButton>
          </RailFoot>
        </Rail>
      </Body>
    </Page>
  );
};

export default App;
